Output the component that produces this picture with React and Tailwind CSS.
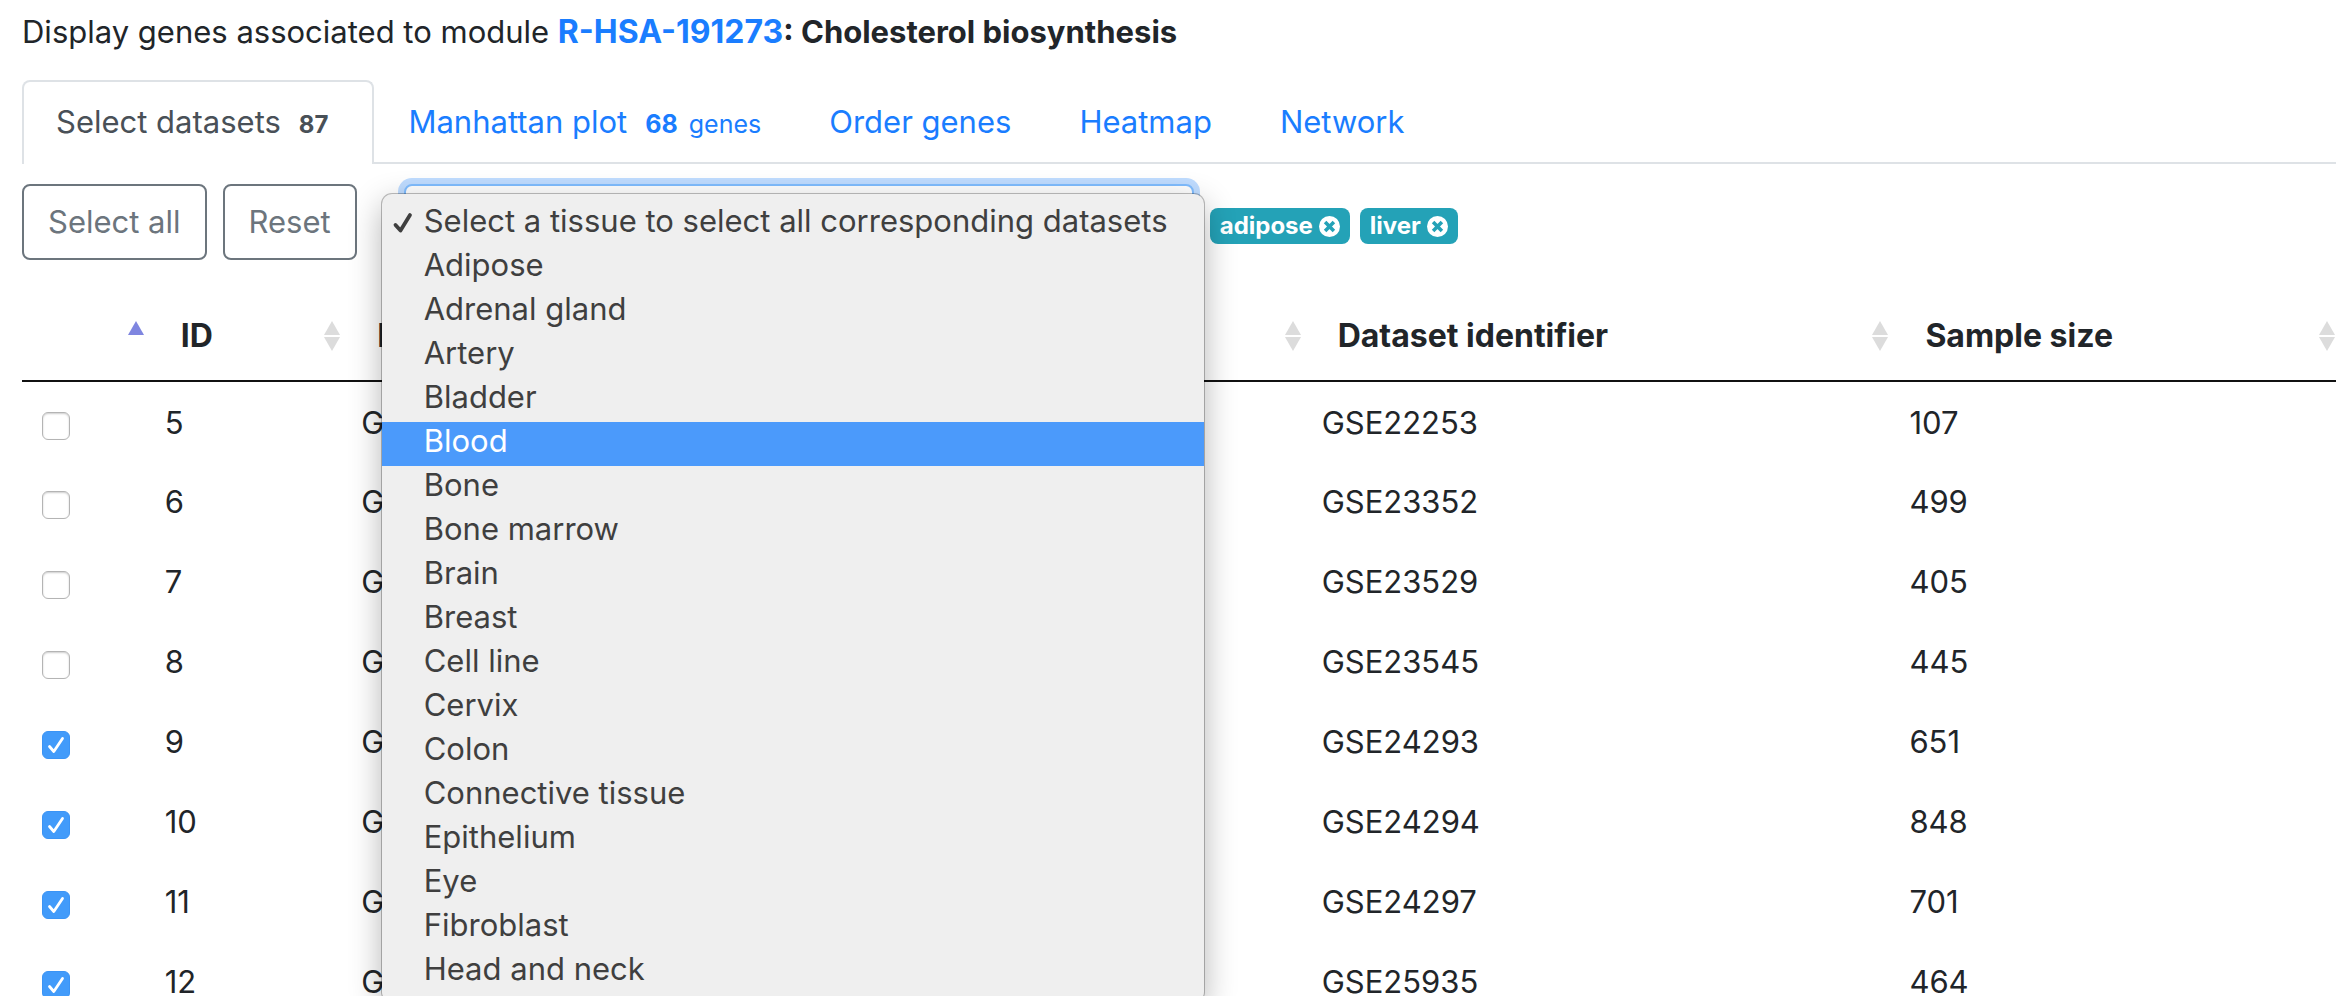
import { useState } from "react";

const tissues = [
  "Select a tissue to select all corresponding datasets",
  "Adipose",
  "Adrenal gland",
  "Artery",
  "Bladder",
  "Blood",
  "Bone",
  "Bone marrow",
  "Brain",
  "Breast",
  "Cell line",
  "Cervix",
  "Colon",
  "Connective tissue",
  "Epithelium",
  "Eye",
  "Fibroblast",
  "Head and neck",
];

const datasets = [
  { id: 5, name: "GSE22253", size: 107 },
  { id: 6, name: "GSE23352", size: 499 },
  { id: 7, name: "GSE23529", size: 405 },
  { id: 8, name: "GSE23545", size: 445 },
  { id: 9, name: "GSE24293", size: 651 },
  { id: 10, name: "GSE24294", size: 848 },
  { id: 11, name: "GSE24297", size: 701 },
  { id: 12, name: "GSE25935", size: 464 },
];

const defaultSelected = [9, 10, 11, 12];

function SortIcon({ active }) {
  return (
    <svg width="18" height="32" viewBox="0 0 18 32" className="shrink-0">
      <path d="M9 1 L17 15 H1 Z" fill={active ? "#7f86e0" : "#dcdcdc"} />
      {!active && <path d="M9 31 L17 17 H1 Z" fill="#dcdcdc" />}
    </svg>
  );
}

function HeaderCell({ label, active }) {
  return (
    <th className="h-[89px] p-0 pl-9 text-left text-[32px] font-bold">
      <div className="flex items-center justify-between">
        <span>{label}</span>
        <SortIcon active={active} />
      </div>
    </th>
  );
}

function Checkbox({ label, checked, onChange }) {
  return (
    <span className="relative block size-7">
      <input
        type="checkbox"
        aria-label={label}
        checked={checked}
        onChange={onChange}
        className="block size-7 appearance-none rounded-md border border-[#b4b4b4] bg-white shadow-[inset_0_1px_2px_rgba(0,0,0,0.2)] checked:border-[#3b94f5] checked:bg-[#429bfa] checked:shadow-none"
      />
      {checked && (
        <svg viewBox="0 0 28 28" className="pointer-events-none absolute inset-0">
          <path
            d="M7.5 15.5 L11.8 20.5 L20.5 7.5"
            fill="none"
            stroke="white"
            strokeWidth="2.8"
            strokeLinecap="round"
            strokeLinejoin="round"
          />
        </svg>
      )}
    </span>
  );
}

function Badge({ label, onRemove }) {
  return (
    <span className="flex h-9 items-center gap-1.5 rounded-lg bg-[#24a2b7] px-2.5 text-2xl leading-none font-bold text-white">
      {label}
      <button type="button" aria-label={`Remove ${label}`} onClick={onRemove}>
        <svg width="21" height="21" viewBox="0 0 20 20" className="block">
          <circle cx="10" cy="10" r="10" fill="white" />
          <path
            d="M5.8 5.8 L14.2 14.2 M14.2 5.8 L5.8 14.2"
            stroke="#24a2b7"
            strokeWidth="3.4"
          />
        </svg>
      </button>
    </span>
  );
}

export default function App() {
  const [tissue, setTissue] = useState(tissues[0]);
  const [highlighted, setHighlighted] = useState("Blood");
  const [tags, setTags] = useState(["adipose", "liver"]);
  const [selected, setSelected] = useState(defaultSelected);

  const toggle = (id) => {
    setSelected((prev) =>
      prev.includes(id) ? prev.filter((x) => x !== id) : [...prev, id]
    );
  };

  return (
    <div className="h-screen overflow-hidden bg-white pt-2 pr-4 pl-[22px] font-['Inter',sans-serif] text-[31px] leading-12 text-[#212529]">
      <p>
        Display genes associated to module{" "}
        <b>
          <a href="#module" className="text-[32px] text-[#1a7dff]">
            R-HSA-191273
          </a>
          : Cholesterol biosynthesis
        </b>
      </p>

      {/* Tabs */}
      <nav className="mt-6 flex border-b-2 border-[#dee2e6] text-[#1a7dff]">
        <a
          href="#datasets"
          className="-mb-0.5 flex items-baseline gap-[18px] rounded-t-lg border-2 border-b-0 border-[#dee2e6] bg-white pt-4 pr-11 pb-[18px] pl-8 text-[#495057]"
        >
          Select datasets
          <b className="text-2xl">87</b>
        </a>
        <a href="#manhattan" className="flex items-baseline gap-[18px] px-[34px] pt-[18px]">
          Manhattan plot
          <span className="text-[25px]">
            <b className="mr-1">68</b> genes
          </span>
        </a>
        <a href="#order" className="px-[34px] pt-[18px]">
          Order genes
        </a>
        <a href="#heatmap" className="px-[34px] pt-[18px]">
          Heatmap
        </a>
        <a href="#network" className="px-[34px] pt-[18px]">
          Network
        </a>
      </nav>

      {/* Toolbar */}
      <div className="mt-5 flex items-center gap-4">
        <button
          type="button"
          onClick={() => setSelected(datasets.map((d) => d.id))}
          className="h-[76px] rounded-lg border-2 border-[#6c757d] px-6 text-[#6c757d]"
        >
          Select all
        </button>
        <button
          type="button"
          onClick={() => setSelected([])}
          className="h-[76px] rounded-lg border-2 border-[#6c757d] px-6 text-[#6c757d]"
        >
          Reset
        </button>
        <div className="relative ml-[31px]">
          <select
            aria-label="Tissue"
            value={tissue}
            onChange={(e) => setTissue(e.target.value)}
            className="block h-[76px] w-[790px] appearance-none rounded-lg border-2 border-[#80bdff] bg-white px-6 ring-6 ring-[#bfdcff] outline-none"
          >
            {tissues.map((t) => (
              <option key={t}>{t}</option>
            ))}
          </select>
          <ul
            role="listbox"
            aria-label="Tissue options"
            className="absolute top-[10px] -left-[22px] z-10 w-[822px] rounded-[10px] bg-[#efefef] py-2 leading-10 text-[#3f3f3f] shadow-[0_0_0_1px_rgba(0,0,0,0.25),0_10px_32px_rgba(0,0,0,0.3)]"
          >
            {tissues.map((t) => (
              <li
                key={t}
                role="option"
                aria-selected={t === tissue}
                onMouseEnter={() => setHighlighted(t)}
                onClick={() => setTissue(t)}
                className={
                  t === highlighted
                    ? "flex h-11 items-center bg-[#4b9afb] pb-1.5 text-white"
                    : "flex h-11 items-center pb-1.5"
                }
              >
                <span className="flex w-[42px] shrink-0 justify-center pt-1">
                  {t === tissue && (
                    <svg width="22" height="22" viewBox="0 0 22 22">
                      <path
                        d="M3.5 13 L8.5 18.5 L18 3"
                        fill="none"
                        stroke="currentColor"
                        strokeWidth="3.8"
                        strokeLinecap="round"
                        strokeLinejoin="round"
                      />
                    </svg>
                  )}
                </span>
                <span className="whitespace-nowrap">{t}</span>
              </li>
            ))}
          </ul>
        </div>
        <div className="flex gap-2.5 pt-2">
          {tags.map((tag) => (
            <Badge
              key={tag}
              label={tag}
              onRemove={() => setTags(tags.filter((x) => x !== tag))}
            />
          ))}
        </div>
      </div>

      {/* Datasets table */}
      <table className="mt-8 w-full table-fixed border-collapse">
        <colgroup>
          <col className="w-[5.3%]" />
          <col className="w-[8.5%]" />
          <col className="w-[41.5%]" />
          <col className="w-[25.4%]" />
          <col className="w-[19.3%]" />
        </colgroup>
        <thead className="border-b-2 border-[#111111]">
          <tr>
            <HeaderCell label="" active />
            <HeaderCell label="ID" />
            <HeaderCell label="Name" />
            <HeaderCell label="Dataset identifier" />
            <HeaderCell label="Sample size" />
          </tr>
        </thead>
        <tbody>
          {datasets.map((d) => (
            <tr key={d.id} className="h-20">
              <td className="px-5 pt-2">
                <Checkbox
                  label={`Dataset ${d.id}`}
                  checked={selected.includes(d.id)}
                  onChange={() => toggle(d.id)}
                />
              </td>
              <td className="px-5 pt-0.5">{d.id}</td>
              <td className="px-5 pt-0.5">{d.name}</td>
              <td className="px-5 pt-0.5">{d.name}</td>
              <td className="px-5 pt-0.5">{d.size}</td>
            </tr>
          ))}
        </tbody>
      </table>
    </div>
  );
}
